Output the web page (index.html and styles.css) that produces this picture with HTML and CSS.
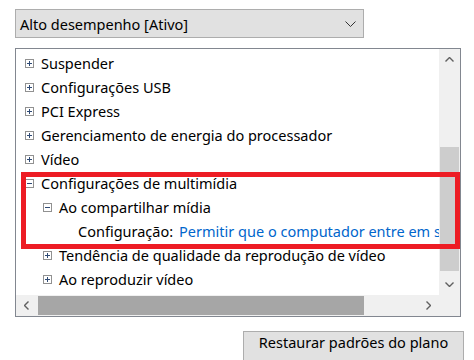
FILE: index.html
```html
<!DOCTYPE html>
<html>
<head>
<title>Opções de energia - Configurações avançadas</title>
<link rel="stylesheet" href="styles.css">
</head>
<body>
<div class="plan-select">
	<span>Alto desempenho [Ativo]</span>
	<svg class="chevron" width="11" height="6" viewBox="0 0 11 6"><path d="M0.5 0.5l5 5 5-5" fill="none" stroke="#333" stroke-width="1"/></svg>
</div>

<div class="tree">
	<div class="tree-rows">
		<div class="row lvl1"><svg class="exp" width="9" height="9"><rect x="0.5" y="0.5" width="8" height="8" fill="#fff" stroke="#919191"/><path d="M2 4.5h5M4.5 2v5" stroke="#2f4a75"/></svg><span>Suspender</span></div>
		<div class="row lvl1"><svg class="exp" width="9" height="9"><rect x="0.5" y="0.5" width="8" height="8" fill="#fff" stroke="#919191"/><path d="M2 4.5h5M4.5 2v5" stroke="#2f4a75"/></svg><span>Configurações USB</span></div>
		<div class="row lvl1"><svg class="exp" width="9" height="9"><rect x="0.5" y="0.5" width="8" height="8" fill="#fff" stroke="#919191"/><path d="M2 4.5h5M4.5 2v5" stroke="#2f4a75"/></svg><span>PCI Express</span></div>
		<div class="row lvl1"><svg class="exp" width="9" height="9"><rect x="0.5" y="0.5" width="8" height="8" fill="#fff" stroke="#919191"/><path d="M2 4.5h5M4.5 2v5" stroke="#2f4a75"/></svg><span>Gerenciamento de energia do processador</span></div>
		<div class="row lvl1"><svg class="exp" width="9" height="9"><rect x="0.5" y="0.5" width="8" height="8" fill="#fff" stroke="#919191"/><path d="M2 4.5h5M4.5 2v5" stroke="#2f4a75"/></svg><span>Vídeo</span></div>
		<div class="row lvl1"><svg class="exp" width="9" height="9"><rect x="0.5" y="0.5" width="8" height="8" fill="#fff" stroke="#919191"/><path d="M2 4.5h5" stroke="#2f4a75"/></svg><span>Configurações de multimídia</span></div>
		<div class="row lvl2"><svg class="exp" width="9" height="9"><rect x="0.5" y="0.5" width="8" height="8" fill="#fff" stroke="#919191"/><path d="M2 4.5h5" stroke="#2f4a75"/></svg><span>Ao compartilhar mídia</span></div>
		<div class="row lvl3"><span>Configuração:</span><span class="value">Permitir que o computador entre em suspensão</span></div>
		<div class="row lvl2"><svg class="exp" width="9" height="9"><rect x="0.5" y="0.5" width="8" height="8" fill="#fff" stroke="#919191"/><path d="M2 4.5h5M4.5 2v5" stroke="#2f4a75"/></svg><span>Tendência de qualidade da reprodução de vídeo</span></div>
		<div class="row lvl2"><svg class="exp" width="9" height="9"><rect x="0.5" y="0.5" width="8" height="8" fill="#fff" stroke="#919191"/><path d="M2 4.5h5M4.5 2v5" stroke="#2f4a75"/></svg><span>Ao reproduzir vídeo</span></div>
	</div>

	<div class="vscroll">
		<div class="sb-btn"><svg width="9" height="5" viewBox="0 0 9 5"><path d="M0.5 4.5l4-4 4 4" fill="none" stroke="#606060" stroke-width="1.4"/></svg></div>
		<div class="vtrack"><div class="vthumb"></div></div>
		<div class="sb-btn"><svg width="9" height="5" viewBox="0 0 9 5"><path d="M0.5 0.5l4 4 4-4" fill="none" stroke="#606060" stroke-width="1.4"/></svg></div>
	</div>

	<div class="hscroll">
		<div class="sb-btn"><svg width="5" height="9" viewBox="0 0 5 9"><path d="M4.5 0.5l-4 4 4 4" fill="none" stroke="#606060" stroke-width="1.4"/></svg></div>
		<div class="htrack"><div class="hthumb"></div></div>
		<div class="sb-btn"><svg width="5" height="9" viewBox="0 0 5 9"><path d="M0.5 0.5l4 4-4 4" fill="none" stroke="#606060" stroke-width="1.4"/></svg></div>
	</div>
	<div class="corner"></div>

	<div class="highlight"></div>
</div>

<div class="actions">
	<button class="btn">Restaurar padrões do plano</button>
</div>
</body>
</html>
```

FILE: styles.css
```css
body { margin: 0; background: #fff; color: #000; font-family: "Noto Sans", "Open Sans", sans-serif; font-size: 14.5px; }

.plan-select { margin: 9px 0 0 15px; width: 349px; height: 29px; box-sizing: border-box; border: 1px solid #adadad; background: #e1e1e1; display: flex; align-items: center; justify-content: space-between; padding: 0 7px 0 4px; }
.plan-select span { line-height: 20px; }
.chevron { display: block; }

.tree { position: relative; margin: 10px 0 0 15px; width: 446px; height: 269px; box-sizing: border-box; border: 1px solid #828790; display: grid; grid-template-columns: 423px 21px; grid-template-rows: 246px 21px; }
.tree-rows { padding-top: 2px; overflow: hidden; white-space: nowrap; }
.row { height: 24px; display: flex; align-items: center; }
.row.lvl1 { padding-left: 9px; }
.row.lvl2 { padding-left: 27px; }
.row.lvl3 { padding-left: 62px; }
.exp { display: block; flex: none; margin-right: 7px; }
.value { color: #0066cc; margin-left: 6px; }

.vscroll { background: #f0f0f0; display: flex; flex-direction: column; }
.sb-btn { flex: none; width: 21px; height: 21px; display: flex; align-items: center; justify-content: center; }
.sb-btn svg { display: block; }
.vtrack { flex: 1; }
.vthumb { margin: 77px 1px 0; height: 124px; background: #cdcdcd; }

.hscroll { background: #f0f0f0; display: flex; }
.htrack { flex: 1; }
.hthumb { margin: 1px 0 0 1px; width: 326px; height: 19px; background: #a6a6a6; }
.corner { background: #f0f0f0; }

.highlight { position: absolute; left: 5px; top: 123px; width: 439px; height: 77px; box-sizing: border-box; border: 5px solid #ed1c24; }

.actions { margin: 14px 0 0 243px; }
.btn { font: inherit; color: #000; width: 221px; height: 32px; box-sizing: border-box; border: 1px solid #adadad; background: #e1e1e1; padding: 0 0 10px; line-height: 20px; }
```
